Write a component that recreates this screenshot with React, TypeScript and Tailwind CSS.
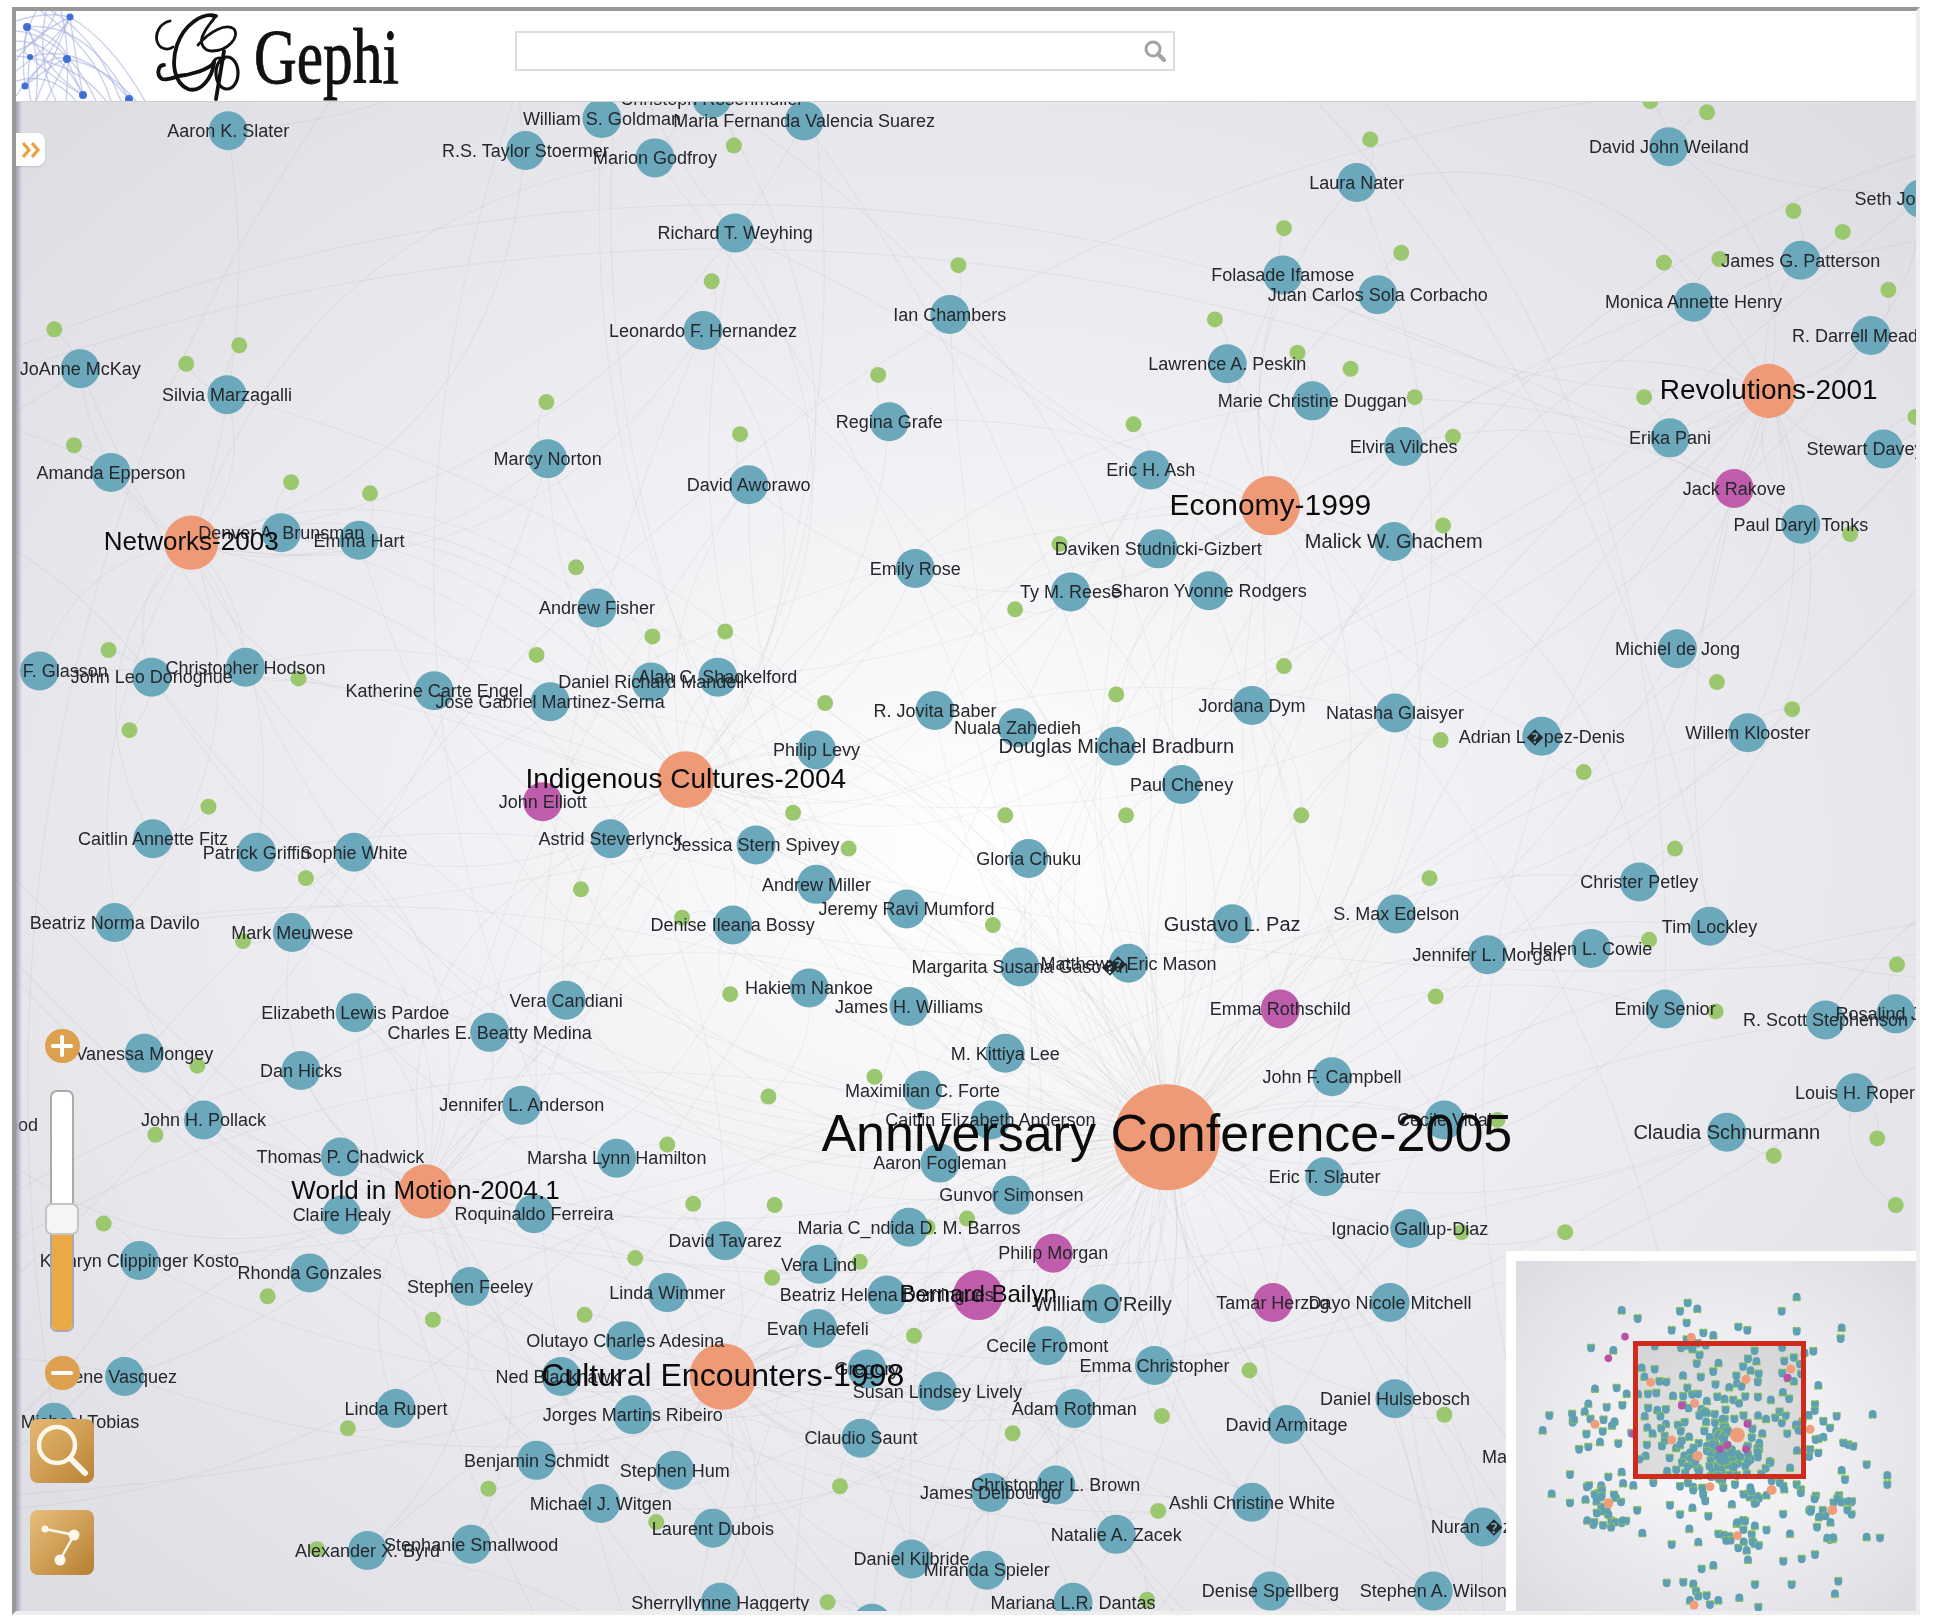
const S = 1934 / 1568;

type N = [string, number, number, number?, number?];

const teal: N[] = [
  ["Aaron K. Slater", 185, 106],
  ["Christoph Rosenmuller", 577, 80],
  ["William S. Goldman", 488, 96],
  ["Maria Fernanda Valencia Suarez", 652, 98],
  ["R.S. Taylor Stoermer", 426, 122],
  ["Marion Godfroy", 531, 128],
  ["David John Weiland", 1353, 119],
  ["Laura Nater", 1100, 148],
  ["Seth Jones", 1558, 161, 1540],
  ["Richard T. Weyhing", 596, 189],
  ["Folasade Ifamose", 1040, 223],
  ["Juan Carlos Sola Corbacho", 1117, 239],
  ["James G. Patterson", 1460, 211],
  ["Monica Annette Henry", 1373, 245],
  ["Ian Chambers", 770, 255],
  ["Leonardo F. Hernandez", 570, 268],
  ["R. Darrell Meadows", 1517, 272, 1517],
  ["JoAnne McKay", 65, 299],
  ["Silvia Marzagalli", 184, 320],
  ["Lawrence A. Peskin", 995, 295],
  ["Marie Christine Duggan", 1064, 325],
  ["Erika Pani", 1354, 355],
  ["Regina Grafe", 721, 342],
  ["Marcy Norton", 444, 372],
  ["Elvira Vilches", 1138, 362],
  ["Stewart Davey", 1527, 364, 1512],
  ["Amanda Epperson", 90, 383],
  ["David Aworawo", 607, 393],
  ["Eric H. Ash", 933, 381],
  ["Paul Daryl Tonks", 1460, 425],
  ["Denver A. Brunsman", 228, 432],
  ["Emma Hart", 291, 438],
  ["Daviken Studnicki-Gizbert", 939, 445],
  ["Malick W. Ghachem", 1130, 439, 1130, 20],
  ["Emily Rose", 742, 461],
  ["Ty M. Reese", 868, 480],
  ["Sharon Yvonne Rodgers", 980, 479],
  ["Andrew Fisher", 484, 493],
  ["Michiel de Jong", 1360, 526],
  ["Christopher Hodson", 199, 541],
  ["John Leo Donoghue", 123, 549],
  ["F. Glasson", 32, 544, 53],
  ["Daniel Richard Mandell", 528, 553],
  ["Alan C. Shackelford", 582, 549],
  ["Katherine Carte Engel", 352, 560],
  ["Jose Gabriel Martinez-Serna", 446, 569],
  ["R. Jovita Baber", 758, 576],
  ["Nuala Zahedieh", 825, 590],
  ["Jordana Dym", 1015, 572],
  ["Natasha Glaisyer", 1131, 578],
  ["Adrian L\uFFFDpez-Denis", 1250, 597],
  ["Willem Klooster", 1417, 594],
  ["Douglas Michael Bradburn", 905, 605, 905, 20],
  ["Philip Levy", 662, 608],
  ["Paul Cheney", 958, 636],
  ["Caitlin Annette Fitz", 124, 680],
  ["Patrick Griffin", 208, 691],
  ["Sophie White", 287, 691],
  ["Astrid Steverlynck", 495, 680],
  ["Jessica Stern Spivey", 613, 685],
  ["Gloria Chuku", 834, 696],
  ["Christer Petley", 1329, 715],
  ["Andrew Miller", 662, 717],
  ["Jeremy Ravi Mumford", 735, 737],
  ["Denise Ileana Bossy", 594, 750],
  ["Beatriz Norma Davilo", 93, 748],
  ["Mark Meuwese", 237, 756],
  ["Gustavo L. Paz", 999, 749, 999, 20],
  ["S. Max Edelson", 1132, 741],
  ["Tim Lockley", 1386, 751],
  ["Helen L. Cowie", 1290, 769],
  ["Jennifer L. Morgan", 1206, 774],
  ["Margarita Susana Gasc\uFFFDn", 827, 784],
  ["Matthew\uFFFDEric Mason", 915, 781],
  ["Hakiem Nankoe", 656, 801],
  ["James H. Williams", 737, 816],
  ["Vera Candiani", 459, 811],
  ["Elizabeth Lewis Pardoe", 288, 821],
  ["Emily Senior", 1350, 818],
  ["Rosalind J. Beiler", 1537, 822, 1545],
  ["R. Scott Stephenson", 1480, 827],
  ["Charles E. Beatty Medina", 397, 837],
  ["M. Kittiya Lee", 815, 854],
  ["Vanessa Mongey", 117, 854],
  ["Dan Hicks", 244, 868],
  ["John F. Campbell", 1080, 873],
  ["Maximilian C. Forte", 748, 884],
  ["Louis H. Roper", 1504, 886],
  ["Jennifer L. Anderson", 423, 896],
  ["John H. Pollack", 165, 908],
  ["Alison Wood", -30, 912, -10],
  ["Caitlin Elizabeth Anderson", 803, 908],
  ["Cecile Vidal", 1171, 908],
  ["Claudia Schnurmann", 1400, 918, 1400, 20],
  ["Thomas P. Chadwick", 276, 938],
  ["Marsha Lynn Hamilton", 500, 939],
  ["Aaron Fogleman", 762, 943],
  ["Eric T. Slauter", 1074, 954],
  ["Gunvor Simonsen", 820, 969],
  ["Claire Healy", 277, 985],
  ["Roquinaldo Ferreira", 433, 984],
  ["Ignacio Gallup-Diaz", 1143, 996],
  ["Maria C_ndida D. M. Barros", 737, 995],
  ["David Tavarez", 588, 1006],
  ["Vera Lind", 664, 1025],
  ["Kathryn Clippinger Kosto", 113, 1022],
  ["Rhonda Gonzales", 251, 1032],
  ["Stephen Feeley", 381, 1043],
  ["Linda Wimmer", 541, 1048],
  ["Beatriz Helena Domingues", 719, 1050],
  ["William O'Reilly", 893, 1057, 894, 20],
  ["Dayo Nicole Mitchell", 1127, 1056],
  ["Evan Haefeli", 663, 1077],
  ["Olutayo Charles Adesina", 507, 1087],
  ["Cecile Fromont", 849, 1091],
  ["Emma Christopher", 936, 1107],
  ["Ned Blackhawk", 455, 1116, 452],
  ["Gregory", 703, 1110],
  ["Susan Lindsey Lively", 760, 1128],
  ["Irene Vasquez", 101, 1116, 97],
  ["John Michael Tobias", 44, 1153, 47],
  ["Linda Rupert", 321, 1142],
  ["Adam Rothman", 871, 1142],
  ["Daniel Hulsebosch", 1131, 1134],
  ["Jorges Martins Ribeiro", 513, 1147],
  ["David Armitage", 1043, 1155],
  ["Claudio Saunt", 698, 1166],
  ["Benjamin Schmidt", 435, 1184],
  ["Stephen Hum", 547, 1192],
  ["Martin Klein", 1240, 1181],
  ["James Delbourgo", 803, 1210],
  ["Christopher L. Brown", 856, 1204],
  ["Ashli Christine White", 1015, 1218],
  ["Michael J. Witgen", 487, 1219],
  ["Natalie A. Zacek", 905, 1244],
  ["Laurent Dubois", 578, 1239],
  ["Nuran \uFFFDzdemir", 1202, 1238, 1211],
  ["Alexander X. Byrd", 298, 1257],
  ["Stephanie Smallwood", 382, 1252],
  ["Daniel Kilbride", 739, 1264],
  ["Miranda Spieler", 800, 1273],
  ["Denise Spellberg", 1030, 1290],
  ["Stephen A. Wilson", 1162, 1290],
  ["Sherryllynne Haggerty", 584, 1299],
  ["Mariana L.R. Dantas", 870, 1299],
  ["", 707, 1316],
];

const purple: N[] = [
  ["Jack Rakove", 1406, 396],
  ["John Elliott", 440, 650],
  ["Emma Rothschild", 1038, 818],
  ["Philip Morgan", 854, 1016],
  ["Tamar Herzog", 1032, 1056],
];

const hubs: [string, number, number, number, number][] = [
  ["Anniversary Conference-2005", 946, 922, 43, 52],
  ["Cultural Encounters-1998", 586, 1116, 27, 32],
  ["Economy-1999", 1030, 410, 24, 30],
  ["Revolutions-2001", 1434, 317, 22, 28],
  ["Networks-2003", 155, 440, 22, 26],
  ["Indigenous Cultures-2004", 556, 632, 23, 28],
  ["World in Motion-2004.1", 345, 966, 22, 26],
];

const greens: [number, number][] = [
  [1111, 113], [1384, 91], [1338, 82], [595, 118], [1454, 171], [1494, 188], [1041, 185], [1136, 205],
  [777, 215], [1349, 213], [1394, 210], [577, 228], [1531, 235], [985, 259], [44, 267], [194, 280],
  [151, 295], [1052, 286], [1095, 299], [712, 304], [1147, 322], [1333, 322], [919, 344], [443, 326],
  [600, 352], [1178, 354], [1553, 338], [60, 361], [236, 391], [300, 400], [1170, 426], [1500, 433],
  [859, 441], [467, 460], [823, 494], [529, 516], [588, 512], [88, 527], [435, 531], [1041, 540],
  [242, 550], [1392, 553], [669, 570], [905, 563], [1453, 575], [105, 592], [1168, 600], [1284, 626],
  [169, 654], [643, 659], [815, 661], [913, 661], [1055, 661], [688, 688], [1358, 688], [248, 712],
  [471, 721], [1159, 712], [553, 744], [805, 750], [197, 763], [1337, 762], [1538, 782], [592, 806],
  [1164, 808], [1391, 820], [160, 864], [709, 873], [623, 889], [126, 920], [1214, 908], [541, 928],
  [1522, 923], [1438, 937], [1537, 977], [562, 976], [628, 977], [84, 992], [784, 988], [1185, 999],
  [1269, 999], [515, 1020], [626, 1036], [217, 1051], [697, 1023], [351, 1070], [474, 1066], [741, 1083],
  [1013, 1111], [942, 1148], [1171, 1147], [821, 1162], [282, 1158], [681, 1205], [396, 1207], [939, 1225],
  [532, 1234], [257, 1256], [671, 1299], [930, 1297], [1040, 1055], [752, 995],
];

let seed = 12345;
const rnd = () => {
  seed = (seed * 1664525 + 1013904223) % 4294967296;
  return seed / 4294967296;
};

const pts = teal.concat(purple).map((n) => [n[1] * S, n[2] * S] as [number, number]);
const hubPts = hubs
  .map((h) => [h[1] * S, h[2] * S] as [number, number])
  .concat([[-300, 500], [700, -300], [2250, 900], [800, 2000], [2200, 100], [1700, 1900], [-300, 1500]]);

const arc = (a: [number, number], b: [number, number]) => {
  const c = (rnd() > 0.5 ? 1 : -1) * (0.12 + rnd() * 0.3);
  const mx = (a[0] + b[0]) / 2 - (b[1] - a[1]) * c;
  const my = (a[1] + b[1]) / 2 + (b[0] - a[0]) * c;
  return `M${a[0].toFixed(0)} ${a[1].toFixed(0)}Q${mx.toFixed(0)} ${my.toFixed(0)} ${b[0].toFixed(0)} ${b[1].toFixed(0)}`;
};

const edges: string[] = [];
pts.forEach((p) => {
  const sorted = hubPts
    .map((h) => ({ h, d: Math.hypot(h[0] - p[0], h[1] - p[1]) }))
    .sort((x, y) => x.d - y.d);
  edges.push(arc(p, sorted[0].h));
  if (rnd() > 0.5) edges.push(arc(p, sorted[1].h));
  if (rnd() > 0.45) edges.push(arc(p, hubPts[0]));
  if (rnd() > 0.5) edges.push(arc(p, hubPts[Math.floor(rnd() * hubPts.length)]));
});
greens.forEach((g) => {
  const p: [number, number] = [g[0] * S, g[1] * S];
  const near = pts.map((q) => ({ q, d: Math.hypot(q[0] - p[0], q[1] - p[1]) })).sort((x, y) => x.d - y.d)[0];
  edges.push(arc(p, near.q));
});

const mapX = (x: number) => 1636 + (x - 16) * (168 / 1900);
const mapY = (y: number) => 1344 + (y - 102) * (132 / 1509);
const zx = (x: number) => 1490 + x / 3;
const zy = (y: number) => 1240 + y / 3;

const outerBlobs: [number, number][] = [
  [395, 210], [443, 237], [303, 325], [370, 330], [593, 190], [570, 215], [622, 205], [590, 250], [545, 272],
  [670, 285], [745, 262], [772, 272], [920, 170], [875, 215], [920, 275], [1055, 262], [1052, 297], [970, 335],
  [985, 435], [975, 495], [1040, 530], [1148, 522], [1075, 615], [1130, 675], [1192, 705], [1192, 735], [1170, 895],
  [1130, 890], [1020, 900], [1045, 1025], [1035, 1060], [905, 1035], [795, 1035], [748, 1072], [805, 1103], [975, 945],
  [900, 880], [880, 965], [935, 958], [670, 975], [635, 988], [545, 915], [625, 905], [570, 825], [540, 797],
  [598, 865], [685, 883], [655, 830], [457, 878], [395, 850], [310, 855], [185, 760], [240, 705], [240, 790],
  [158, 570], [178, 528], [248, 548], [295, 490], [350, 503], [397, 497], [315, 445], [380, 445], [355, 712],
  [395, 695], [295, 622], [385, 612], [330, 605], [530, 1030], [580, 1028], [610, 1030], [618, 1055], [650, 1068],
  [685, 1080], [640, 280], [590, 300], [410, 460], [1000, 545], [1020, 565], [1000, 590], [960, 630], [985, 640],
  [430, 735], [490, 730], [570, 740], [610, 740], [700, 745], [735, 735], [780, 770], [920, 735], [1065, 720],
  [1055, 690], [1060, 610], [1090, 620], [985, 595], [920, 560], [880, 740], [740, 850], [765, 845], [745, 925],
  [770, 930], [720, 900], [785, 885], [600, 1080], [625, 1070], [660, 1095],
];
const clusterHubs: [number, number, number][] = [
  [315, 553, 10], [355, 790, 28], [845, 750, 18], [660, 740, 12], [1027, 810, 22], [742, 887, 14], [960, 568, 8],
];
const miniOuter: [number, number][] = outerBlobs.map((b) => [zx(b[0]), zy(b[1])]);
clusterHubs.forEach(([x, y, n]) => {
  for (let i = 0; i < n; i++) {
    const a = rnd() * Math.PI * 2;
    const r = 20 + rnd() * 70;
    miniOuter.push([zx(x + Math.cos(a) * r), zy(y + Math.sin(a) * r)]);
  }
});
const miniInner: [number, number][] = pts.map((p) => [mapX(p[0]), mapY(p[1])]);
for (let i = 0; i < 50; i++) {
  const a = rnd() * Math.PI * 2;
  const r = 4 + rnd() * 40;
  miniInner.push([mapX(946 * S) - 18 + Math.cos(a) * r, mapY(922 * S) + 10 + Math.sin(a) * r * 0.8]);
}
const miniBlobs = miniOuter.concat(miniInner);

const miniOrange: [number, number, number][] = [
  [604, 292, 4.5], [315, 553, 4.5], [960, 568, 4.5], [660, 740, 4.5], [845, 750, 5], [355, 790, 5], [1027, 810, 5],
  [742, 887, 4.5], [612, 1095, 4.5], [482, 427, 4.5], [768, 418, 4.5], [902, 387, 4.5], [614, 490, 4.5], [742, 585, 7.5],
  [545, 600, 4.5], [623, 648, 5],
];
const miniPurple: [number, number][] = [
  [405, 290], [355, 355], [430, 582], [892, 413], [575, 497], [772, 552], [690, 627], [712, 615], [768, 628],
];

const FONT = "'Liberation Sans', Arial, sans-serif";

function Graph() {
  return (
    <svg viewBox="16 102 1900 1509" className="absolute inset-0 w-full h-full blur-[0.7px]" fontFamily={FONT}>
      <g fill="none" stroke="#000" strokeOpacity={0.045} strokeWidth={1.2}>
        {edges.map((d, i) => (
          <path key={i} d={d} />
        ))}
      </g>
      {greens.map(([x, y], i) => (
        <circle key={i} cx={x * S} cy={y * S} r={8} fill="#9bc76f" />
      ))}
      {teal.map((n, i) => (
        <circle key={i} cx={n[1] * S} cy={n[2] * S} r={19.5} fill="#6ba8bc" />
      ))}
      {purple.map((n, i) => (
        <circle key={i} cx={n[1] * S} cy={n[2] * S} r={19.5} fill="#bf5cab" />
      ))}
      <circle cx={793 * S} cy={1050 * S} r={25} fill="#bf5cab" />
      {hubs.map((h, i) => (
        <circle key={i} cx={h[1] * S} cy={h[2] * S} r={h[3] * S} fill="#ef9a76" />
      ))}
      <g fill="#24272b" textAnchor="middle">
        {teal.concat(purple).map((n, i) => {
          const size = n[4] ?? 18;
          return (
            <text key={i} x={(n[3] ?? n[1]) * S} y={n[2] * S + size * 0.35} fontSize={size}>
              {n[0]}
            </text>
          );
        })}
      </g>
      <g fill="#0c0c0c" textAnchor="middle">
        <text x={793 * S} y={1049 * S + 8} fontSize={24}>
          Bernard Bailyn
        </text>
        {hubs.map((h, i) => (
          <text key={i} x={h[1] * S} y={(h[0].startsWith("Anniv") ? 918.5 : h[2] - 1.2) * S + h[4] * 0.35} fontSize={h[4]}>
            {h[0]}
          </text>
        ))}
      </g>
    </svg>
  );
}

function Minimap() {
  return (
    <div className="absolute right-0 bottom-0 w-[410px] h-[360px] bg-white pl-[10px] pt-[10px]">
      <div className="w-full h-full bg-[radial-gradient(ellipse_at_center,#ffffff_0%,#f1f1f4_35%,#dbdbe1_100%)]">
        <svg viewBox="1516 1261 400 350" className="w-full h-full block blur-[0.6px]">
          <rect x={1636} y={1344} width={168} height={133} fill="#000" fillOpacity={0.1} />
          {miniBlobs.map(([x, y], i) => (
            <g key={i}>
              <circle cx={x - 2} cy={y + (i % 3 === 0 ? 2.6 : -2.6)} r={2.3} fill="#88c05c" />
              <circle cx={x + 2} cy={y + (i % 3 === 0 ? 2.6 : -2.6)} r={2.3} fill="#88c05c" />
              <circle cx={x} cy={y} r={3.9} fill="#5f9fb4" />
            </g>
          ))}
          {miniPurple.map(([x, y], i) => (
            <circle key={i} cx={zx(x)} cy={zy(y)} r={3.8} fill="#bb4fa6" />
          ))}
          {miniOrange.map(([x, y, r], i) => (
            <circle key={i} cx={zx(x)} cy={zy(y)} r={r} fill="#ef9d7a" />
          ))}
          <rect x={1635.5} y={1343.5} width={168} height={133} fill="none" stroke="#cf2a1c" strokeWidth={5} />
        </svg>
      </div>
    </div>
  );
}

function Controls() {
  return (
    <div className="absolute left-[14px] top-[927px] w-[64px] flex flex-col items-center">
      <div className="w-[35px] h-[34px] rounded-full bg-[#dca04e] flex items-center justify-center blur-[0.3px]">
        <svg width="22" height="22" viewBox="0 0 22 22">
          <path d="M11 2v18M2 11h18" stroke="#fff" strokeWidth="4" strokeLinecap="round" />
        </svg>
      </div>
      <div className="relative mt-[27px] w-[24px] h-[242px] rounded-[7px] border-2 border-[#a9a9a9] bg-white overflow-visible flex flex-col justify-end">
        <div className="h-[115px] w-full rounded-b-[5px] bg-[#eaa944]" />
        <div className="absolute left-[-7px] top-[111px] w-[34px] h-[32px] rounded-[7px] border-2 border-[#c4c4c4] bg-[#f5f5f5]" />
      </div>
      <div className="mt-[24px] w-[35px] h-[34px] rounded-full bg-[#dca04e] flex items-center justify-center">
        <div className="w-[22px] h-[4px] rounded-full bg-white" />
      </div>
      <div className="mt-[29px] w-[64px] h-[64px] rounded-lg bg-gradient-to-br from-[#e6b972] to-[#ba8334] flex items-center justify-center">
        <svg width="58" height="58" viewBox="0 0 58 58" fill="none" stroke="#fdf6ea" strokeLinecap="round">
          <circle cx="24" cy="23" r="18" strokeWidth="4.5" />
          <path d="M38 37L52 51" strokeWidth="6" />
        </svg>
      </div>
      <div className="mt-[27px] w-[64px] h-[65px] rounded-lg bg-gradient-to-br from-[#e8c07c] to-[#b67f2f] flex items-center justify-center">
        <svg width="50" height="50" viewBox="0 0 50 50" fill="none" stroke="#fdf6ea" strokeWidth="2.5">
          <path d="M8 11L37 17L23 42" />
          <circle cx="8" cy="11" r="3.5" fill="#fdf6ea" stroke="none" />
          <circle cx="37" cy="17" r="5.5" fill="#fdf6ea" stroke="none" />
          <circle cx="23" cy="42" r="5.5" fill="#fdf6ea" stroke="none" />
        </svg>
      </div>
    </div>
  );
}

function HeaderArt() {
  const dots: [number, number, number][] = [
    [11, 16, 4], [54, 6, 3.5], [14, 46, 3], [51, 48, 4], [9, 75, 3.5], [67, 84, 4], [113, 88, 4],
  ];
  const lines = [
    "M11 16Q70 10 113 88", "M54 6Q95 30 129 90", "M14 46Q65 30 113 88", "M51 48Q90 55 120 90", "M0 30Q40 30 67 84",
    "M11 16Q30 60 67 84", "M54 6Q30 50 9 75", "M54 6Q60 50 67 84", "M11 16Q50 30 51 48", "M14 46Q40 70 67 84",
    "M0 60Q40 30 54 6", "M9 75Q40 50 51 48", "M20 0Q0 40 14 46", "M35 0Q80 25 105 90", "M0 10Q30 0 54 6",
    "M11 16Q5 50 9 75", "M0 85Q30 40 51 48", "M30 0Q20 50 40 90", "M54 6Q40 40 20 90", "M0 45Q60 50 90 90",
    "M51 48Q40 70 30 90", "M14 46Q10 70 15 90", "M51 48Q60 70 67 84", "M25 0Q80 40 95 90", "M0 20Q50 25 80 90",
    "M11 16Q25 40 20 90", "M54 6Q15 25 0 50", "M40 0Q30 30 0 40", "M45 0Q55 40 50 90", "M0 70Q35 60 60 90",
  ];
  return (
    <svg width="130" height="90" viewBox="0 0 130 90" className="shrink-0 blur-[0.6px]">
      <g fill="none" stroke="#a9b2de" strokeOpacity={0.6} strokeWidth={1.4}>
        {lines.map((d, i) => (
          <path key={i} d={d} />
        ))}
      </g>
      {dots.map(([x, y, r], i) => (
        <circle key={i} cx={x} cy={y} r={r} fill="#3f6fd6" />
      ))}
    </svg>
  );
}

function Monogram() {
  return (
    <svg width="86" height="88" viewBox="0 0 86 88" fill="none" stroke="#111" strokeWidth="2.8" strokeLinecap="round" className="shrink-0 blur-[0.5px]">
      <path d="M16 8C6 10 1 20 3 28C5 36 14 38 19 34" />
      <path d="M62 3C48 -1 30 12 23 32C17 50 20 70 34 76C46 80 58 66 60 50C52 58 40 60 32 62C24 62 14 68 8 66C2 62 4 52 10 52" strokeWidth="3.8" />
      <path d="M44 32C56 18 72 10 80 16C86 24 74 38 58 38C50 38 44 30 50 20C56 8 66 2 58 3" />
      <path d="M70 38L62 86" strokeWidth="3.8" />
      <ellipse cx="73" cy="60" rx="11" ry="16" strokeWidth="3.2" />
      <path d="M58 52C60 44 66 44 70 46" />
    </svg>
  );
}

export default function App() {
  return (
    <div className="w-[1934px] h-[1618px] bg-white pl-[12px] pt-[7px] overflow-hidden">
      <div className="w-[1908px] h-[1608px] border-t-4 border-l-4 border-r-4 border-b-4 border-t-[#999999] border-l-[#999999] border-r-[#eeeeee] border-b-[#eeeeee] flex flex-col">
        <header className="h-[91px] shrink-0 bg-white border-b border-[#d0d0d0] flex items-start">
          <HeaderArt />
          <div className="ml-[8px] mt-[2px]">
            <Monogram />
          </div>
          <div className="w-[146px] ml-[14px] mt-[1px] h-[90px] shrink-0">
            <span className="block origin-left scale-x-[0.76] text-[78px] leading-[90px] text-[#111] [-webkit-text-stroke:0.9px_#111] font-['Liberation_Serif',serif] blur-[0.4px]">
              Gephi
            </span>
          </div>
          <div className="ml-[115px] mt-[20px] w-[660px] h-[40px] border-2 border-[#dddddd] bg-white flex items-center justify-end pr-[6px]">
            <svg width="24" height="24" viewBox="0 0 24 24" fill="none" stroke="#a3a3a3" strokeLinecap="round" className="blur-[0.3px]">
              <circle cx="10" cy="10" r="7" strokeWidth="3" />
              <path d="M15 15L21 21" strokeWidth="4" />
            </svg>
          </div>
        </header>
        <main className="relative flex-1 overflow-hidden bg-[radial-gradient(ellipse_at_center,#ffffff_0%,#f3f3f6_32%,#dcdce3_100%)]">
          <Graph />
          <div className="absolute left-0 top-0 bottom-0 w-[6px] bg-gradient-to-r from-[#a2a2b2] to-transparent" />
          <div className="absolute left-0 top-[31px] w-[29px] h-[33px] rounded-r-lg bg-white shadow-sm flex items-center justify-center">
            <svg width="22" height="18" viewBox="0 0 22 18" fill="none" stroke="#e8a33d" strokeWidth="3.2" className="blur-[0.3px]">
              <path d="M3 2L9 9L3 16M12 2L18 9L12 16" />
            </svg>
          </div>
          <Controls />
          <Minimap />
        </main>
      </div>
    </div>
  );
}
